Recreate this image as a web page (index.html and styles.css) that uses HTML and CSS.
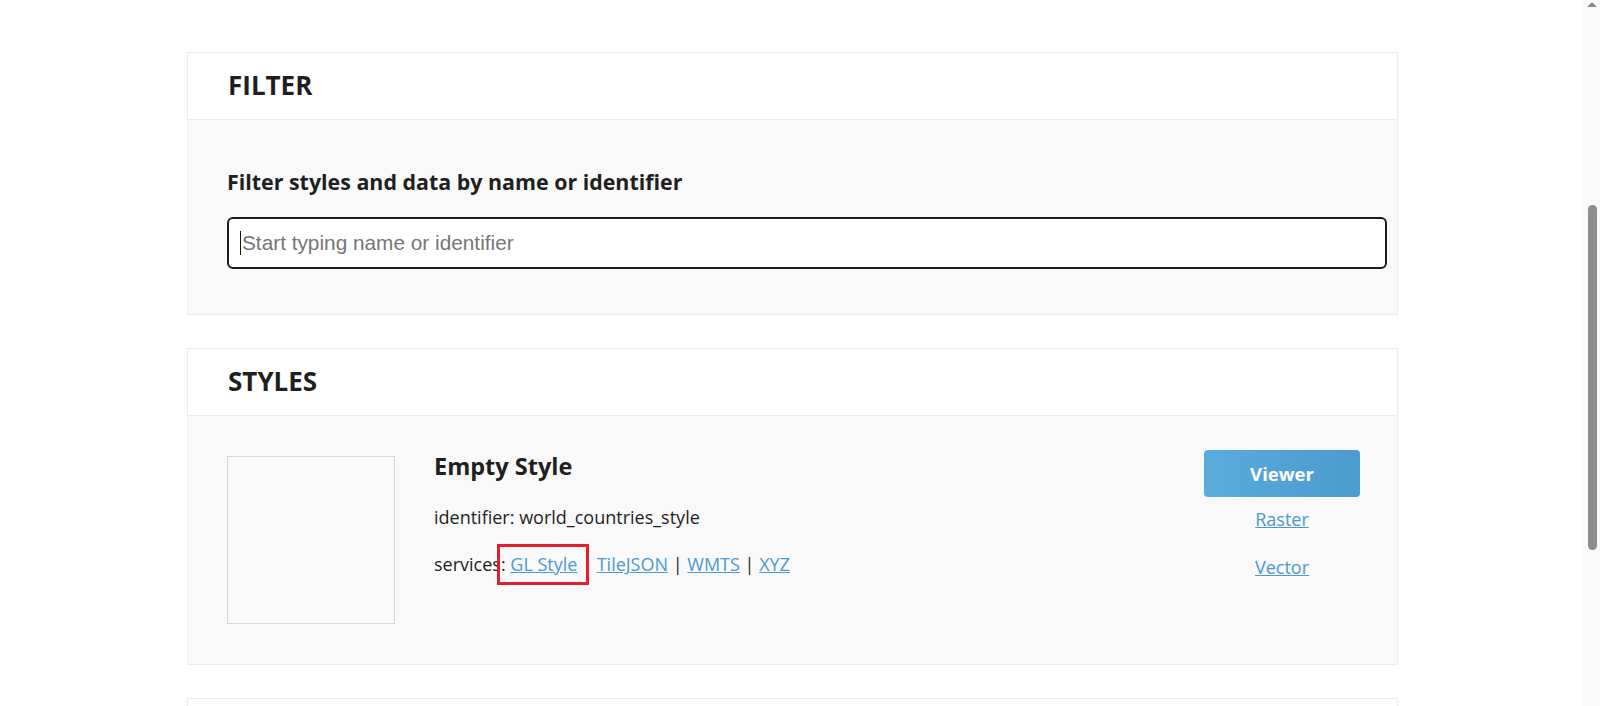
FILE: index.html
```html
<!DOCTYPE html>
<html lang="en">
<head>
<meta charset="utf-8">
<title>Styles</title>
<link rel="stylesheet" href="styles.css">
</head>
<body>
<main class="page">
  <section class="card">
    <header class="card-header"><h2 class="card-title">FILTER</h2></header>
    <div class="card-body filter-body">
      <h3 class="filter-label">Filter styles and data by name or identifier</h3>
      <div class="search-box"><span class="caret"></span><span class="placeholder">Start typing name or identifier</span></div>
    </div>
  </section>

  <section class="card">
    <header class="card-header"><h2 class="card-title">STYLES</h2></header>
    <div class="card-body style-row">
      <div class="thumb"></div>
      <div class="style-info">
        <h3 class="style-name">Empty Style</h3>
        <p class="style-line">identifier: world_countries_style</p>
        <p class="style-line services">services: <span class="highlight"><a href="#">GL Style</a></span> | <a href="#">TileJSON</a> | <a href="#">WMTS</a> | <a href="#">XYZ</a></p>
      </div>
      <div class="style-actions">
        <a class="btn-viewer" href="#">Viewer</a>
        <a class="action-link first" href="#">Raster</a>
        <a class="action-link" href="#">Vector</a>
      </div>
    </div>
  </section>

  <section class="card">
    <header class="card-header"></header>
  </section>
</main>
<div class="scrollbar"><span class="scroll-up"></span><span class="scroll-thumb"></span></div>
</body>
</html>
```
FILE: styles.css
```css
html, body {
  margin: 0;
  padding: 0;
  height: 100%;
  overflow: hidden;
  background: #ffffff;
}
body {
  font-family: "Open Sans", "Noto Sans", sans-serif;
  color: #1f1f1f;
}
.page {
  width: calc(100% - 15px);
  padding-top: 52px;
  display: flex;
  flex-direction: column;
  align-items: center;
  gap: 33px;
}
.card {
  width: 1211px;
  box-sizing: border-box;
  border: 1px solid #ececec;
  background: #fff;
}
.card-header {
  height: 66px;
  border-bottom: 1px solid #ececec;
  padding-left: 40px;
  display: flex;
  align-items: center;
}
.card-title {
  margin: 0;
  font-size: 26px;
  font-weight: 700;
  line-height: 36px;
  color: #1f1f1f;
  position: relative;
  top: -1px;
}
.card-body {
  background: #f9f9f9;
}
.filter-body {
  padding: 47px 10px 45px 39px;
}
.filter-label {
  margin: 0 0 20px 0;
  font-size: 21.4px;
  line-height: 30px;
  font-weight: 700;
  color: #1f1f1f;
}
.search-box {
  box-sizing: border-box;
  height: 52px;
  border: 2px solid #1c1c1c;
  border-radius: 6px;
  background: #fff;
  display: flex;
  align-items: center;
  padding-left: 11px;
}
.caret {
  width: 1px;
  height: 24px;
  background: #111;
  margin-right: 1px;
}
.placeholder {
  font-family: "Liberation Sans", Arial, sans-serif;
  font-size: 20.8px;
  color: #767676;
}
.style-row {
  display: flex;
  align-items: flex-start;
  padding: 32px 37px 40px 39px;
}
.thumb {
  width: 168px;
  height: 168px;
  box-sizing: border-box;
  border: 1px solid #d5d5d5;
  background: #fafafa;
  margin-top: 8px;
  flex: none;
}
.style-info {
  flex: 1;
  margin-left: 39px;
  padding-top: 2px;
}
.style-name {
  margin: 0;
  font-size: 23.5px;
  line-height: 32px;
  font-weight: 700;
  color: #1f1f1f;
}
.style-line {
  margin: 23px 0 0 0;
  font-size: 18px;
  line-height: 24px;
  color: #1f1f1f;
}
.style-line.services {
  margin-top: 23px;
}
a {
  color: #4a9ad0;
  text-decoration: underline;
}
.highlight {
  position: relative;
}
.highlight::after {
  content: "";
  position: absolute;
  left: -13px;
  right: -12px;
  top: -8px;
  bottom: -9px;
  border: 3px solid #e3202b;
}
.style-actions {
  width: 156px;
  display: flex;
  flex-direction: column;
  align-items: center;
  margin-top: 2px;
}
.btn-viewer {
  width: 156px;
  height: 47px;
  box-sizing: border-box;
  border-radius: 4px;
  background: linear-gradient(90deg, #5aacdc 0%, #4b9bce 100%);
  color: #fff;
  font-size: 18.5px;
  font-weight: 700;
  text-decoration: none;
  display: flex;
  align-items: center;
  justify-content: center;
}
.action-link {
  font-size: 18px;
  line-height: 24px;
  margin-top: 24px;
}
.action-link.first {
  margin-top: 10px;
}
.scrollbar {
  position: fixed;
  top: 0;
  right: 0;
  bottom: 0;
  width: 17px;
  background: #f9f9f9;
}
.scroll-up {
  position: absolute;
  top: 2px;
  left: 4px;
  width: 0;
  height: 0;
  border-left: 5px solid transparent;
  border-right: 5px solid transparent;
  border-bottom: 5px solid #8a8a8a;
}
.scroll-thumb {
  position: absolute;
  top: 205px;
  left: 5px;
  width: 9px;
  height: 345px;
  border-radius: 5px;
  background: #8d8d8d;
}
```
